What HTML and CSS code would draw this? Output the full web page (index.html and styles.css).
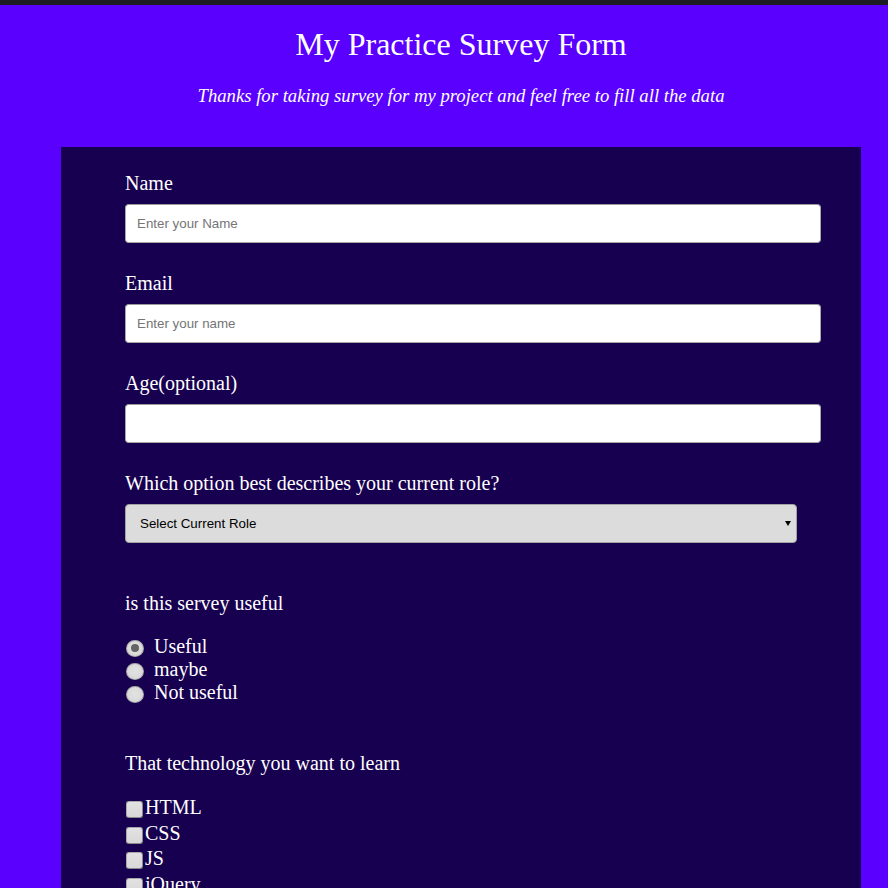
FILE: index.html
```html
<!DOCTYPE html>
<html lang="en">
<head>
<meta charset="utf-8">
<title>My Practice Survey Form</title>
<link rel="stylesheet" href="styles.css">
</head>
<body>
<div class="page">
  <header class="header">
    <h1 class="title">My Practice Survey Form</h1>
    <p class="description">Thanks for taking survey for my project and feel free to fill all the data</p>
  </header>
  <form class="survey">
    <div class="field">
      <label class="label" for="name">Name</label>
      <input class="text-input" id="name" type="text" placeholder="Enter your Name">
    </div>
    <div class="field">
      <label class="label" for="email">Email</label>
      <input class="text-input" id="email" type="email" placeholder="Enter your name">
    </div>
    <div class="field">
      <label class="label" for="age">Age(optional)</label>
      <input class="text-input" id="age" type="number">
    </div>
    <div class="field">
      <label class="label" for="role">Which option best describes your current role?</label>
      <div class="select" id="role">
        <span class="select-text">Select Current Role</span>
        <span class="select-arrow"></span>
      </div>
    </div>
    <div class="group group-radio">
      <p class="label group-title">is this servey useful</p>
      <ul class="options">
        <li class="option"><input class="radio" type="radio" name="useful" checked><span class="radio-text">Useful</span></li>
        <li class="option"><input class="radio" type="radio" name="useful"><span class="radio-text">maybe</span></li>
        <li class="option"><input class="radio" type="radio" name="useful"><span class="radio-text">Not useful</span></li>
      </ul>
    </div>
    <div class="group group-check">
      <p class="label group-title">That technology you want to learn</p>
      <ul class="checks">
        <li class="check"><input class="checkbox" type="checkbox">HTML</li>
        <li class="check"><input class="checkbox" type="checkbox">CSS</li>
        <li class="check"><input class="checkbox" type="checkbox">JS</li>
        <li class="check"><input class="checkbox" type="checkbox">jQuery</li>
        <li class="check"><input class="checkbox" type="checkbox">React</li>
      </ul>
    </div>
  </form>
</div>
</body>
</html>
```
FILE: styles.css
```css
html, body {
  margin: 0;
  padding: 0;
}
body {
  background: #5900ff;
  border-top: 5px solid #1f1d24;
  font-family: "Liberation Serif", "Times New Roman", serif;
  color: #ffffff;
}
.page {
  padding-left: 34px;
}
.header {
  text-align: center;
}
.title {
  font-size: 32px;
  font-weight: normal;
  margin: 21px 0 0;
  line-height: 37px;
}
.description {
  font-style: italic;
  font-size: 18.7px;
  line-height: 22px;
  margin: 22px 0 0;
}
.survey {
  width: 800px;
  margin: 40px auto 0;
  background: #180050;
  padding: 25px 40px 40px 64px;
  box-sizing: border-box;
}
.field {
  margin-bottom: 29px;
}
.label {
  display: block;
  font-size: 20px;
  line-height: 23px;
  margin: 0 0 9px;
}
.text-input {
  display: block;
  box-sizing: border-box;
  width: 100%;
  height: 39px;
  margin: 0;
  border: 1px solid #a7a7a7;
  border-top-color: #9a9a9a;
  border-radius: 4px;
  background: #ffffff;
  padding: 0 11px;
  font-family: "Liberation Sans", Arial, sans-serif;
  font-size: 13.333px;
  color: #000;
}
.text-input::placeholder {
  color: #757575;
}
.select {
  box-sizing: border-box;
  width: 672px;
  height: 39px;
  border: 1px solid #a3a3a3;
  border-radius: 4px;
  background: #dcdcdc;
  display: flex;
  align-items: center;
  justify-content: space-between;
  padding: 0 5px 0 14px;
  font-family: "Liberation Sans", Arial, sans-serif;
  font-size: 13.333px;
  color: #000;
}
.select-arrow {
  width: 0;
  height: 0;
  border-left: 3.5px solid transparent;
  border-right: 3.5px solid transparent;
  border-top: 5px solid #000;
}
.group-title {
  margin: 0 0 20px;
}
.group-radio .group-title {
  margin-top: 49px;
}
.group-check .group-title {
  margin-top: 48px;
  margin-bottom: 21px;
}
.options, .checks {
  list-style: none;
  margin: 0;
  padding: 0;
}
.option {
  font-size: 20px;
  line-height: 23px;
  display: flex;
  align-items: center;
}
.radio {
  appearance: none;
  -webkit-appearance: none;
  width: 18px;
  height: 17px;
  margin: 4px 10px 0 1px;
  border-radius: 50%;
  border: 1.5px solid #aaaaaa;
  background: radial-gradient(circle at 50% 45%, #e2e2e2 0, #dadada 65%, #c8c8c8 100%);
  box-sizing: border-box;
  position: relative;
  flex: none;
}
.radio:checked::after {
  content: "";
  position: absolute;
  left: 3.5px;
  top: 3px;
  width: 8px;
  height: 8px;
  border-radius: 50%;
  background: #646464;
}
.check {
  font-size: 20px;
  line-height: 23px;
  display: flex;
  align-items: flex-start;
  height: 25.7px;
}
.checkbox {
  appearance: none;
  -webkit-appearance: none;
  width: 17px;
  height: 17px;
  margin: 5px 2px 0 1px;
  border-radius: 3px;
  border: 1px solid #a8a8a8;
  border-right-color: #8a8a8a;
  border-bottom-color: #8a8a8a;
  background: linear-gradient(#e2e2e2, #d8d8d8);
  box-sizing: border-box;
  flex: none;
}
```
